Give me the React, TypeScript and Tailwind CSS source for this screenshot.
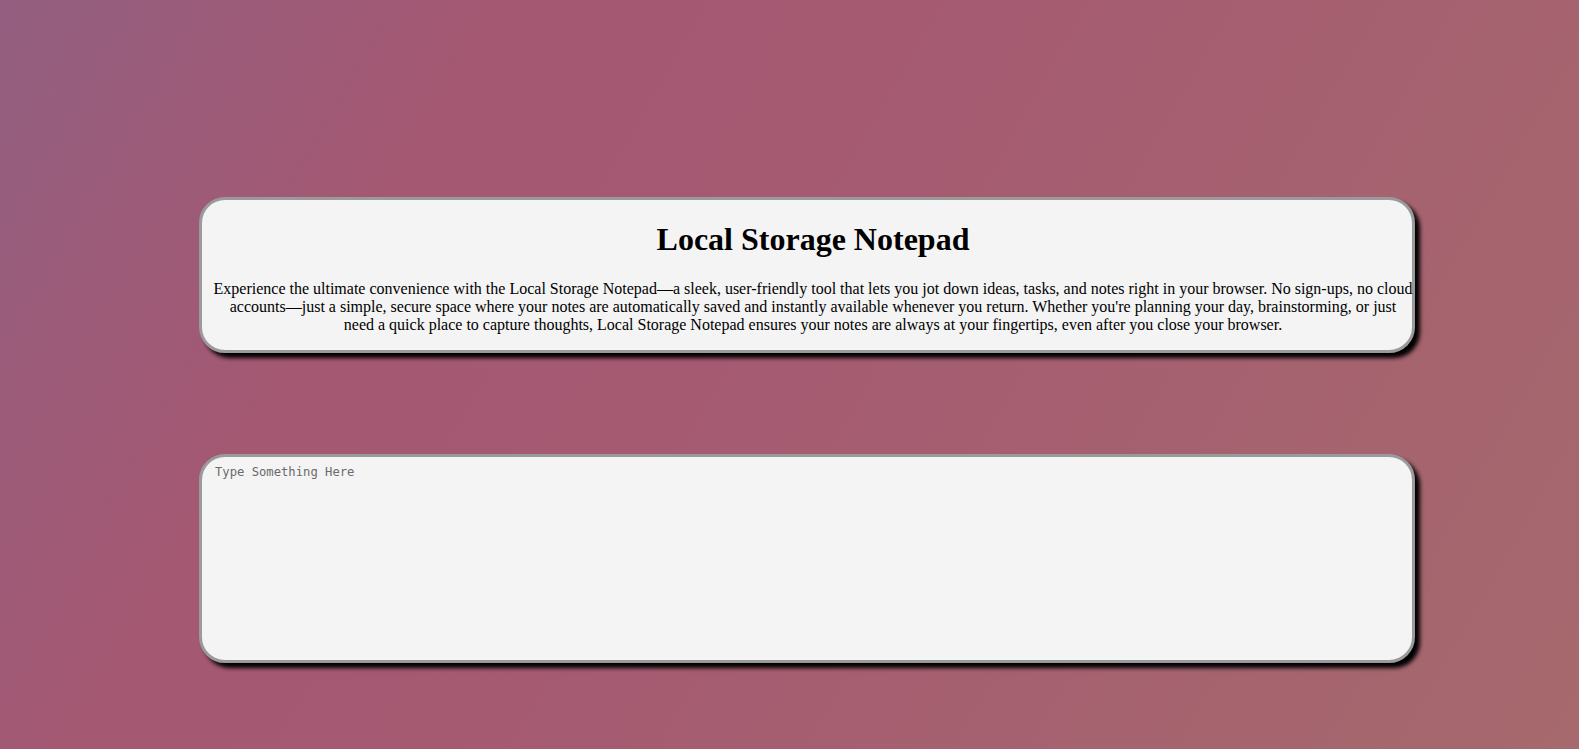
import React from "react";

export default function App() {
  return (
    <div className="min-h-[749px] w-full bg-[linear-gradient(120deg,#935f80_0%,#a45872_25%,#a55a72_45%,#a6696d_100%)] pt-[197px]">
      <div className="ml-[199px] w-[1216px] rounded-[26px] border-[3px] border-[#9a9a9a] bg-[#f4f4f4] shadow-[5px_5px_4px_#000] pl-[20px] pr-[8px] text-center text-black [font-family:'Liberation_Serif',serif]">
        <h1 className="my-[21.44px] text-[32px] font-bold leading-[normal]">Local Storage Notepad</h1>
        <p className="-mx-[20px] mb-4 text-[16px] leading-[normal] whitespace-nowrap">
          Experience the ultimate convenience with the Local Storage Notepad—a sleek, user-friendly tool that lets you jot down ideas, tasks, and notes right in your browser. No sign-ups, no cloud
          <br />
          accounts—just a simple, secure space where your notes are automatically saved and instantly available whenever you return. Whether you're planning your day, brainstorming, or just
          <br />
          need a quick place to capture thoughts, Local Storage Notepad ensures your notes are always at your fingertips, even after you close your browser.
        </p>
      </div>
      <div className="ml-[199px] mt-[101px] h-[209px] w-[1216px] overflow-hidden rounded-[26px] border-[3px] border-[#9a9a9a] bg-[#f4f4f4] shadow-[5px_5px_4px_#000]">
        <textarea
          placeholder="Type Something Here"
          className="block h-full w-full resize-none bg-transparent px-[13px] pt-[8px] pb-[9px] text-[12.2px] leading-[normal] text-black outline-none placeholder:text-[#6a6a6a] [font-family:'DejaVu_Sans_Mono',monospace]"
        />
      </div>
    </div>
  );
}
